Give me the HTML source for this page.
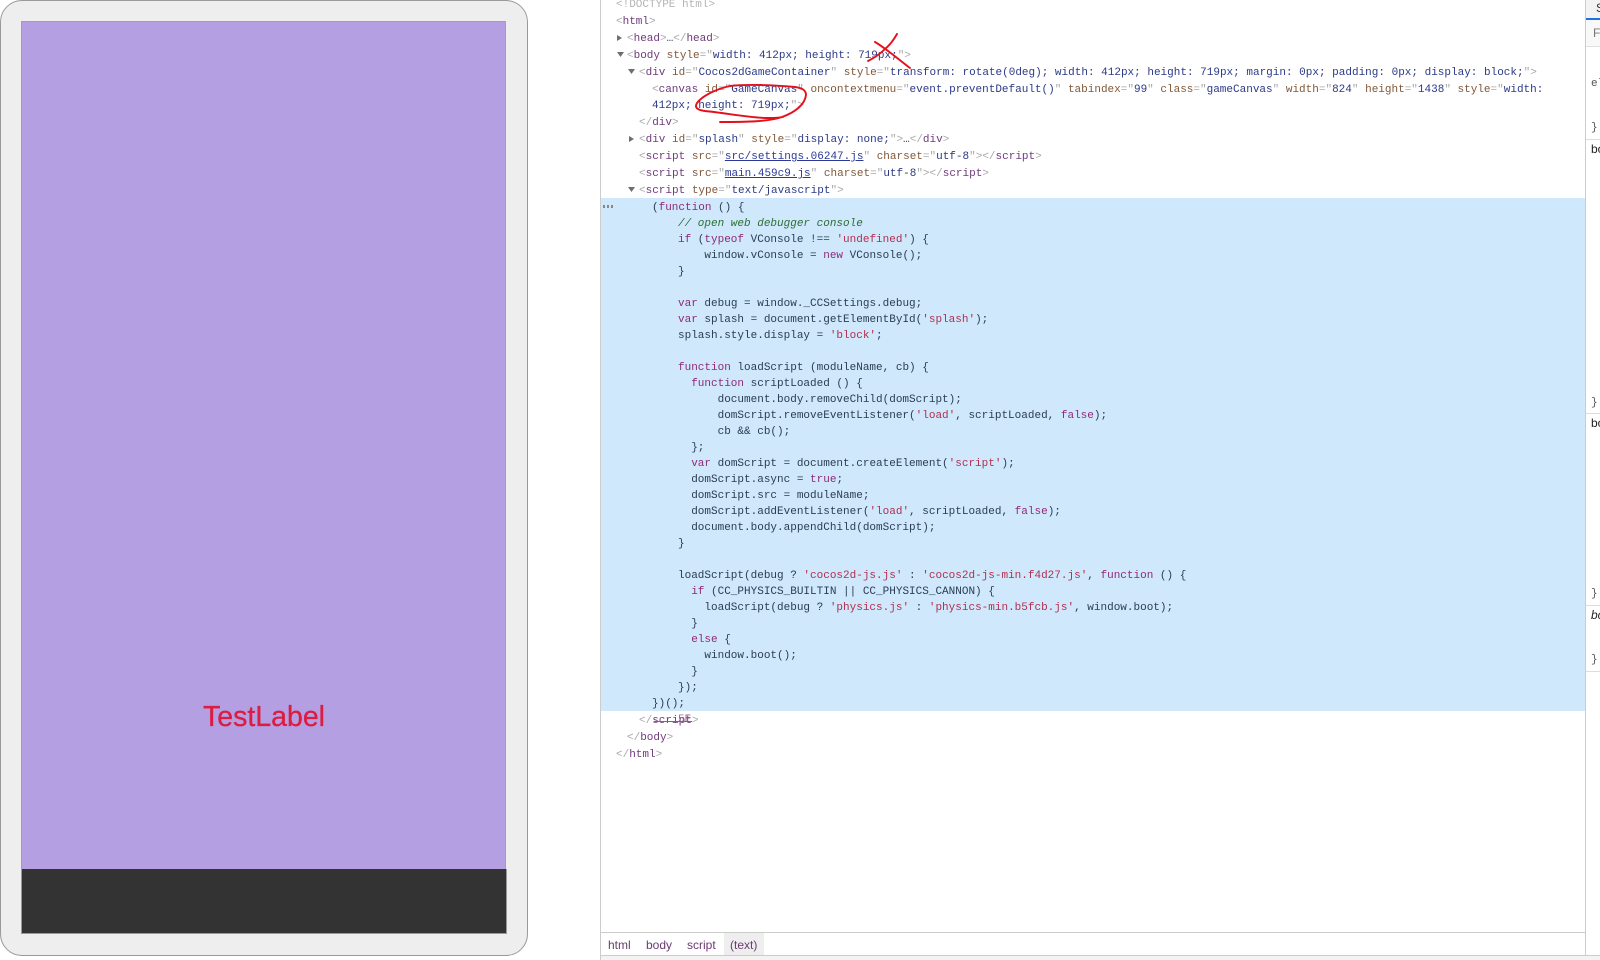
<!DOCTYPE html>
<html><head><meta charset="utf-8"><style>
html,body{margin:0;padding:0;background:#fff;width:1600px;height:960px;overflow:hidden}
body{position:relative;font-family:"Liberation Sans",sans-serif}
.abs{position:absolute}
.l{position:absolute;margin-top:1px;font:11px/14px "Liberation Mono",monospace;white-space:pre;color:#2a3d55}
.t{color:#6f3a7c}.a{color:#80583a}.v{color:#2c3a86}.b{color:#a8a8a8}.g{color:#b4b4b4}
.k{color:#8f2a78}.s{color:#b03050}.c{color:#2c6e34;font-style:italic}.u{color:#2c3a96;text-decoration:underline}
.p{color:#444;font-size:12px;line-height:14px;position:absolute;white-space:pre;font-family:"Liberation Sans",sans-serif}
.m{position:absolute;font:11px/14px "Liberation Mono",monospace;color:#555;white-space:pre}
.crumb{position:absolute;top:938px;font-size:12px;line-height:14px;color:#6b3a72}
</style></head><body>
<div class="abs" style="left:0;top:0;width:526px;height:954px;background:#eee;border:1px solid #999;border-radius:22px"></div>
<div class="abs" style="left:21px;top:21px;width:485px;height:848px;background:#b39fe2;border:1px solid #a49bb8;border-bottom:0;box-sizing:border-box"></div>
<div class="abs" style="left:21px;top:869px;width:486px;height:65px;background:#333;border:1px solid #999;border-top:0;box-sizing:border-box"></div>
<div class="abs" style="left:203px;top:701px;font-size:28.5px;line-height:32px;color:#dc1c40;-webkit-text-stroke:.3px #dc1c40">TestLabel</div>

<div class="abs" style="left:600px;top:0;width:1px;height:960px;background:#ccc"></div>
<div class="abs" style="left:601px;top:198px;width:984px;height:513px;background:#cfe8fc"></div>
<div class="abs" style="left:1585px;top:0;width:1px;height:960px;background:#ccc"></div>

<div class="abs" style="left:1586px;top:0;width:14px;height:18px;background:#f3f3f3"></div>
<div class="abs" style="left:1586px;top:18px;width:14px;height:2px;background:#1a73e8"></div>
<div class="abs" style="left:1586px;top:20px;width:14px;height:26px;background:#f8f8f8"></div>
<div class="abs" style="left:1586px;top:46px;width:14px;height:1px;background:#e0e0e0"></div>
<div class="p" style="left:1596px;top:1px;color:#333">S</div>
<div class="p" style="left:1593px;top:26px;color:#777">F</div>
<div class="m" style="left:1591px;top:77px">el</div>
<div class="m" style="left:1591px;top:121px">}</div>
<div class="abs" style="left:1586px;top:139px;width:14px;height:1px;background:#ddd"></div>
<div class="p" style="left:1591px;top:142px;color:#222">bo</div>
<div class="m" style="left:1591px;top:396px">}</div>
<div class="abs" style="left:1586px;top:413px;width:14px;height:1px;background:#ddd"></div>
<div class="p" style="left:1591px;top:416px;color:#222">bo</div>
<div class="m" style="left:1591px;top:587px">}</div>
<div class="abs" style="left:1586px;top:605px;width:14px;height:1px;background:#ddd"></div>
<div class="p" style="left:1591px;top:608px;color:#222;font-style:italic">bo</div>
<div class="m" style="left:1591px;top:653px">}</div>
<div class="abs" style="left:1586px;top:671px;width:14px;height:1px;background:#ddd"></div>

<div class="l" style="left:616px;top:-3px"><span class="g">&lt;!DOCTYPE html&gt;</span></div>
<div class="l" style="left:616px;top:14px"><span class="b">&lt;</span><span class="t">html</span><span class="b">&gt;</span></div>
<div class="l" style="left:627px;top:31px"><span class="b">&lt;</span><span class="t">head</span><span class="b">&gt;</span>…<span class="b">&lt;/</span><span class="t">head</span><span class="b">&gt;</span></div>
<div class="l" style="left:627px;top:48px"><span class="b">&lt;</span><span class="t">body</span> <span class="a">style</span><span class="b">="</span><span class="v">width: 412px; height: 719px;</span><span class="b">"&gt;</span></div>
<div class="l" style="left:639px;top:65px"><span class="b">&lt;</span><span class="t">div</span> <span class="a">id</span><span class="b">="</span><span class="v">Cocos2dGameContainer</span><span class="b">"</span> <span class="a">style</span><span class="b">="</span><span class="v">transform: rotate(0deg); width: 412px; height: 719px; margin: 0px; padding: 0px; display: block;</span><span class="b">"&gt;</span></div>
<div class="l" style="left:652px;top:82px"><span class="b">&lt;</span><span class="t">canvas</span> <span class="a">id</span><span class="b">="</span><span class="v">GameCanvas</span><span class="b">"</span> <span class="a">oncontextmenu</span><span class="b">="</span><span class="v">event.preventDefault()</span><span class="b">"</span> <span class="a">tabindex</span><span class="b">="</span><span class="v">99</span><span class="b">"</span> <span class="a">class</span><span class="b">="</span><span class="v">gameCanvas</span><span class="b">"</span> <span class="a">width</span><span class="b">="</span><span class="v">824</span><span class="b">"</span> <span class="a">height</span><span class="b">="</span><span class="v">1438</span><span class="b">"</span> <span class="a">style</span><span class="b">="</span><span class="v">width:</span></div>
<div class="l" style="left:652px;top:98px"><span class="v">412px; height: 719px;</span><span class="b">"&gt;</span></div>
<div class="l" style="left:639px;top:115px"><span class="b">&lt;/</span><span class="t">div</span><span class="b">&gt;</span></div>
<div class="l" style="left:639px;top:132px"><span class="b">&lt;</span><span class="t">div</span> <span class="a">id</span><span class="b">="</span><span class="v">splash</span><span class="b">"</span> <span class="a">style</span><span class="b">="</span><span class="v">display: none;</span><span class="b">"&gt;</span>…<span class="b">&lt;/</span><span class="t">div</span><span class="b">&gt;</span></div>
<div class="l" style="left:639px;top:149px"><span class="b">&lt;</span><span class="t">script</span> <span class="a">src</span><span class="b">="</span><span class="u">src/settings.06247.js</span><span class="b">"</span> <span class="a">charset</span><span class="b">="</span><span class="v">utf-8</span><span class="b">"&gt;&lt;/</span><span class="t">script</span><span class="b">&gt;</span></div>
<div class="l" style="left:639px;top:166px"><span class="b">&lt;</span><span class="t">script</span> <span class="a">src</span><span class="b">="</span><span class="u">main.459c9.js</span><span class="b">"</span> <span class="a">charset</span><span class="b">="</span><span class="v">utf-8</span><span class="b">"&gt;&lt;/</span><span class="t">script</span><span class="b">&gt;</span></div>
<div class="l" style="left:639px;top:183px"><span class="b">&lt;</span><span class="t">script</span> <span class="a">type</span><span class="b">="</span><span class="v">text/javascript</span><span class="b">"&gt;</span></div>

<div class="abs" style="left:603px;top:205px;width:12px;height:3px;background:repeating-linear-gradient(90deg,#888 0 2px,transparent 2px 4px)"></div>
<div class="l" style="left:652px;top:200px">(<span class="k">function</span> () {</div>
<div class="l" style="left:678px;top:216px"><span class="c">// open web debugger console</span></div>
<div class="l" style="left:678px;top:232px"><span class="k">if</span> (<span class="k">typeof</span> VConsole !== <span class="s">'undefined'</span>) {</div>
<div class="l" style="left:678px;top:248px">    window.vConsole = <span class="k">new</span> VConsole();</div>
<div class="l" style="left:678px;top:264px">}</div>
<div class="l" style="left:678px;top:296px"><span class="k">var</span> debug = window._CCSettings.debug;</div>
<div class="l" style="left:678px;top:312px"><span class="k">var</span> splash = document.getElementById(<span class="s">'splash'</span>);</div>
<div class="l" style="left:678px;top:328px">splash.style.display = <span class="s">'block'</span>;</div>
<div class="l" style="left:678px;top:360px"><span class="k">function</span> loadScript (moduleName, cb) {</div>
<div class="l" style="left:678px;top:376px">  <span class="k">function</span> scriptLoaded () {</div>
<div class="l" style="left:678px;top:392px">      document.body.removeChild(domScript);</div>
<div class="l" style="left:678px;top:408px">      domScript.removeEventListener(<span class="s">'load'</span>, scriptLoaded, <span class="k">false</span>);</div>
<div class="l" style="left:678px;top:424px">      cb &amp;&amp; cb();</div>
<div class="l" style="left:678px;top:440px">  };</div>
<div class="l" style="left:678px;top:456px">  <span class="k">var</span> domScript = document.createElement(<span class="s">'script'</span>);</div>
<div class="l" style="left:678px;top:472px">  domScript.async = <span class="k">true</span>;</div>
<div class="l" style="left:678px;top:488px">  domScript.src = moduleName;</div>
<div class="l" style="left:678px;top:504px">  domScript.addEventListener(<span class="s">'load'</span>, scriptLoaded, <span class="k">false</span>);</div>
<div class="l" style="left:678px;top:520px">  document.body.appendChild(domScript);</div>
<div class="l" style="left:678px;top:536px">}</div>
<div class="l" style="left:678px;top:568px">loadScript(debug ? <span class="s">'cocos2d-js.js'</span> : <span class="s">'cocos2d-js-min.f4d27.js'</span>, <span class="k">function</span> () {</div>
<div class="l" style="left:678px;top:584px">  <span class="k">if</span> (CC_PHYSICS_BUILTIN || CC_PHYSICS_CANNON) {</div>
<div class="l" style="left:678px;top:600px">    loadScript(debug ? <span class="s">'physics.js'</span> : <span class="s">'physics-min.b5fcb.js'</span>, window.boot);</div>
<div class="l" style="left:678px;top:616px">  }</div>
<div class="l" style="left:678px;top:632px">  <span class="k">else</span> {</div>
<div class="l" style="left:678px;top:648px">    window.boot();</div>
<div class="l" style="left:678px;top:664px">  }</div>
<div class="l" style="left:678px;top:680px">});</div>
<div class="l" style="left:652px;top:696px">})();</div>
<div class="l" style="left:639px;top:713px"><span class="b">&lt;/</span><span class="t">script</span><span class="b">&gt;</span></div>
<div class="l" style="left:678px;top:712px;color:#9a6a9a">5E</div>
<div class="abs" style="left:654px;top:721px;width:38px;height:1px;background:#8a5a8a"></div>
<div class="l" style="left:627px;top:730px"><span class="b">&lt;/</span><span class="t">body</span><span class="b">&gt;</span></div>
<div class="l" style="left:616px;top:747px"><span class="b">&lt;/</span><span class="t">html</span><span class="b">&gt;</span></div>

<svg class="abs" style="left:0;top:0" width="1600" height="960" viewBox="0 0 1600 960">
<g fill="#6e6e6e">
<polygon points="617,35 617,41 622,38"/>
<polygon points="617,52 624,52 620.5,57"/>
<polygon points="628,69 635,69 631.5,74"/>
<polygon points="629,136 629,142 634,139"/>
<polygon points="628,187 635,187 631.5,192"/>
</g>
<g fill="none" stroke="#e4101c" stroke-width="1.9" stroke-linecap="round" stroke-linejoin="round">
<path d="M875 42 C 887 49 899 60 910 68"/>
<path d="M897 34 C 893 41 890 45 885 49 C 880 54 874 58 868 61"/>
<path d="M720 122 C 742 122 768 122 782 117 C 796 112 805 104 806 95 C 806 90 802 88 795 87 C 775 85 745 84 730 86 C 716 89 702 96 697 103 C 694 108 698 110 705 111 C 725 113 745 117 765 118 C 772 118 778 118 783 117"/>
</g>
</svg>

<div class="abs" style="left:601px;top:932px;width:984px;height:1px;background:#ccc"></div>
<div class="abs" style="left:724px;top:933px;width:40px;height:22px;background:#eee"></div>
<div class="abs" style="left:601px;top:955px;width:999px;height:5px;background:#f3f3f3;border-top:1px solid #ccc;box-sizing:border-box"></div>
<div class="crumb" style="left:608px">html</div>
<div class="crumb" style="left:646px">body</div>
<div class="crumb" style="left:687px">script</div>
<div class="crumb" style="left:730px">(text)</div>
</body></html>
